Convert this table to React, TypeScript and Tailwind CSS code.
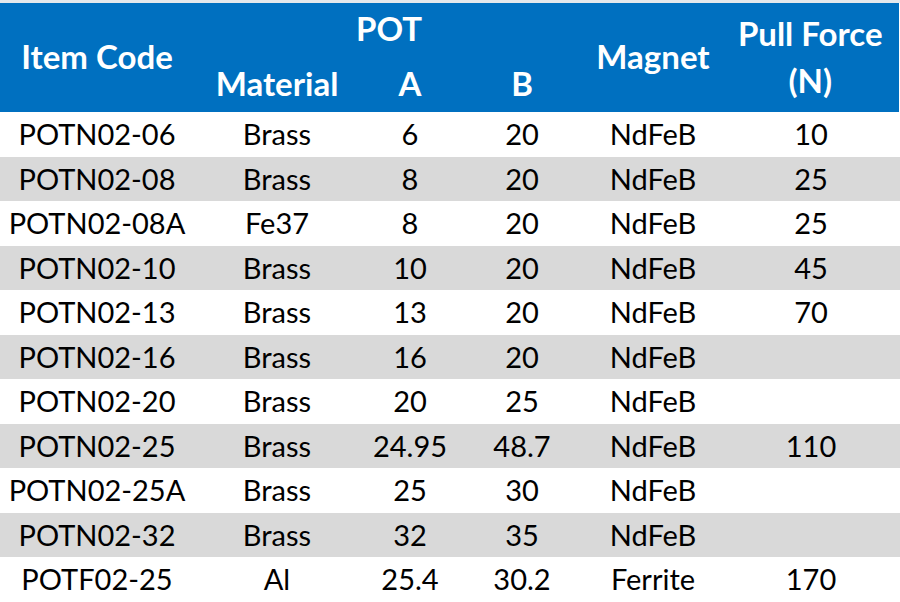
import React from "react";

const rows = [
  ["POTN02-06", "Brass", "6", "20", "NdFeB", "10"],
  ["POTN02-08", "Brass", "8", "20", "NdFeB", "25"],
  ["POTN02-08A", "Fe37", "8", "20", "NdFeB", "25"],
  ["POTN02-10", "Brass", "10", "20", "NdFeB", "45"],
  ["POTN02-13", "Brass", "13", "20", "NdFeB", "70"],
  ["POTN02-16", "Brass", "16", "20", "NdFeB", ""],
  ["POTN02-20", "Brass", "20", "25", "NdFeB", ""],
  ["POTN02-25", "Brass", "24.95", "48.7", "NdFeB", "110"],
  ["POTN02-25A", "Brass", "25", "30", "NdFeB", ""],
  ["POTN02-32", "Brass", "32", "35", "NdFeB", ""],
  ["POTF02-25", "Al", "25.4", "30.2", "Ferrite", "170"],
];

const App = () => {
  return (
    <div className="w-[900px] h-[602px] bg-white overflow-hidden" style={{ fontFamily: "Lato, 'Noto Sans', sans-serif" }}>
      <div className="h-[3px] bg-[#e4e8ec]" />
      <table className="table-fixed border-collapse w-[900px] text-[29px] leading-none text-black">
        <colgroup>
          <col className="w-[194px]" />
          <col className="w-[166px]" />
          <col className="w-[100px]" />
          <col className="w-[124px]" />
          <col className="w-[138px]" />
          <col className="w-[178px]" />
        </colgroup>
        <thead className="text-[33px]">
          <tr className="h-[54px]">
            <th rowSpan={2} className="bg-[#0070c0] text-white font-bold text-center p-0 pb-[3px]">Item Code</th>
            <th colSpan={3} className="bg-[#0070c0] text-white font-bold text-center p-0 pb-[3px]">POT</th>
            <th rowSpan={2} className="bg-[#0070c0] text-white font-bold text-center p-0 pb-[2px]">Magnet</th>
            <th rowSpan={2} className="bg-[#0070c0] text-white font-bold text-center p-0 border-r-[3px] border-white">
              <div className="leading-[47px] pb-[2px]">Pull Force<br />(N)</div>
            </th>
          </tr>
          <tr className="h-[55px]">
            <th className="bg-[#0070c0] text-white font-bold text-center p-0 pb-[3px]">Material</th>
            <th className="bg-[#0070c0] text-white font-bold text-center p-0 pb-[3px]">A</th>
            <th className="bg-[#0070c0] text-white font-bold text-center p-0 pb-[3px]">B</th>
          </tr>
        </thead>
        <tbody>
          {rows.map((row, i) => (
            <tr key={i} className={i % 2 === 1 ? "h-[44.5px] bg-[#d9d9d9]" : "h-[44.5px] bg-white"}>
              {row.map((cell, j) => (
                <td key={j} className="text-center p-0 pb-[1px] font-normal">{cell}</td>
              ))}
            </tr>
          ))}
        </tbody>
      </table>
    </div>
  );
};

export default App;
